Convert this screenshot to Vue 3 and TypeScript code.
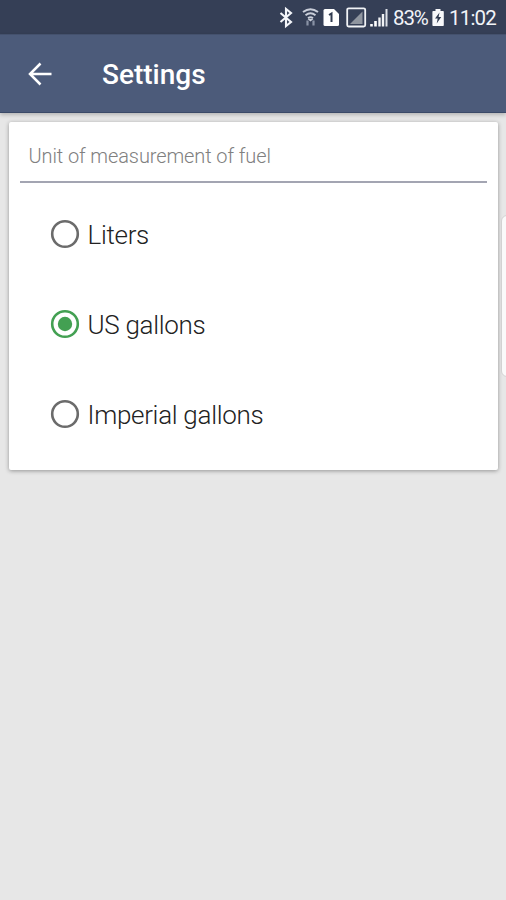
<script setup lang="ts">
import { ref } from 'vue'

interface UnitOption {
  id: string
  label: string
}

const options: UnitOption[] = [
  { id: 'liters', label: 'Liters' },
  { id: 'us', label: 'US gallons' },
  { id: 'imperial', label: 'Imperial gallons' },
]
const selected = ref<string>('us')
</script>

<template>
  <div class="screen">
    <div class="status">
      <svg class="icons" width="119" height="34" viewBox="0 0 119 34" fill="none">
        <path d="M2.500 13l10.500 9-5 4V9l5 4-10.500 9" stroke="#f4f6fa" stroke-width="2.100" />
        <g stroke="#c9ced9" stroke-width="2">
          <path d="M25 12q7.500-5.500 15 0" />
          <path d="M27.500 15.200q5-3.700 10 0" />
          <path d="M30 18.200q2.500-1.800 5 0" />
        </g>
        <path d="M32.500 21.500l-3-2.500h6z" fill="#c9ced9" />
        <path d="M29.500 20.500v5M35.500 20.500v5" stroke="#8992a5" stroke-width="2.200" />
        <path d="M47 9h9l5 5v10.500q0 1.500-1.500 1.500h-12.500q-1.500 0-1.500-1.500v-14q0-1.500 1.500-1.500z" fill="#fff" />
        <path d="M51 15l2.500-1.500V22" stroke="#303b50" stroke-width="2" />
        <rect x="69.200" y="8.300" width="18" height="18.200" rx="1.500" stroke="#f1f3f6" stroke-width="1.800" />
        <path d="M84.500 11.500v12.500H72z" fill="#8f959f" />
        <path d="M93.500 24v2.500M97.500 21v5.500" stroke="#fff" stroke-width="2.600" />
        <path d="M101.500 17.500v9M105 14v12.500" stroke="#f1f3f6" stroke-width="2.400" />
        <path d="M108.500 9v17.500" stroke="#dce0e7" stroke-width="2" />
      </svg>
      <span class="percent">83%</span>
      <svg class="battery" width="12" height="34" viewBox="0 0 12 34">
        <path d="M3.500 9h5v2H11q.8 0 .8.800v13.500q0 .8-.8.800H1.200q-.8 0-.8-.8V11.800q0-.8.8-.8h2.300z" fill="#f7f8fa" />
        <path d="M7.500 12.500l-4.500 6h2.700l-1 5 4.500-6.500H6.600z" fill="#303b50" />
      </svg>
      <span class="clock">11:02</span>
    </div>

    <header class="bar">
      <button class="back" aria-label="Back">
        <svg width="24" height="24" viewBox="0 0 24 24" fill="none" stroke="#fff" stroke-width="2.500">
          <path d="M12.500 1.500L2 12l10.500 10.500M2 12h21.500" />
        </svg>
      </button>
      <h1>Settings</h1>
    </header>

    <main class="content">
      <section class="card">
        <h2>Unit of measurement of fuel</h2>
        <div class="options" role="radiogroup">
          <div
            v-for="option in options"
            :key="option.id"
            class="option"
            role="radio"
            :aria-checked="selected === option.id"
            @click="selected = option.id"
          >
            <svg class="radio" :class="{ on: selected === option.id }" width="30" height="30" viewBox="0 0 30 30">
              <circle class="ring" cx="15" cy="15" r="12.800" />
              <circle v-if="selected === option.id" class="dot" cx="15" cy="15" r="7.200" />
            </svg>
            <span class="label">{{ option.label }}</span>
          </div>
        </div>
      </section>
      <div class="edge-handle"></div>
    </main>
  </div>
</template>

<style>
body {
  margin: 0;
}
</style>

<style scoped>
.screen {
  display: flex;
  flex-direction: column;
  width: 506px;
  height: 900px;
  overflow: hidden;
  position: relative;
  background: #e7e7e7;
  font-family: Roboto, "Liberation Sans", sans-serif;
}
.status {
  display: flex;
  box-sizing: border-box;
  height: 34px;
  padding-left: 278px;
  background: #353f56;
  color: #f2f4f8;
  line-height: 37px;
  white-space: nowrap;
}
.icons,
.battery {
  flex: none;
}
.percent {
  width: 35px;
  margin-left: -4px;
  font-size: 20.5px;
  letter-spacing: -1.1px;
}
.battery {
  margin-left: 4px;
}
.clock {
  margin-left: 5px;
  font-size: 20.5px;
  letter-spacing: -0.8px;
}
.bar {
  display: flex;
  align-items: center;
  box-sizing: border-box;
  height: 79px;
  padding-left: 28px;
  background: #4c5b7a;
  border-top: 1px solid #44516d;
  border-bottom: 1px solid #3b4a68;
  box-shadow: 0 2px 4px rgba(0, 0, 0, 0.22);
  z-index: 1;
}
.back {
  display: flex;
  padding: 0;
  border: 0;
  background: none;
}
h1 {
  margin: 3px 0 0 50px;
  color: #fff;
  font-size: 28px;
  font-weight: 500;
  line-height: 32px;
}
.content {
  padding: 9px 8px 0 9px;
}
.card {
  box-sizing: border-box;
  height: 348px;
  padding: 0 11px;
  background: #fff;
  border-radius: 2px;
  box-shadow: 0 1px 4px rgba(0, 0, 0, 0.36);
}
h2 {
  box-sizing: border-box;
  height: 61px;
  margin: 0;
  padding: 20px 0 0 8.500px;
  border-bottom: 2px solid #a3a5b2;
  color: #808080;
  font-size: 20px;
  font-weight: 300;
  line-height: 28px;
  letter-spacing: -0.1px;
}
.options {
  padding: 6px 0 0 30px;
}
.option {
  display: flex;
  align-items: center;
  height: 90px;
}
.radio {
  flex: none;
}
.ring {
  fill: none;
  stroke: #6b6b6b;
  stroke-width: 2.6px;
}
.on .ring {
  stroke: #43a052;
}
.dot {
  fill: #43a052;
}
.label {
  margin: 1px 0 0 7.5px;
  color: #222;
  font-size: 26px;
  font-weight: 300;
  line-height: 32px;
  letter-spacing: -0.3px;
}
.edge-handle {
  position: absolute;
  top: 215px;
  right: -8px;
  box-sizing: border-box;
  width: 13px;
  height: 162px;
  border: 1px solid #d2d2d2;
  border-radius: 6px;
  background: #fafafa;
}
</style>
